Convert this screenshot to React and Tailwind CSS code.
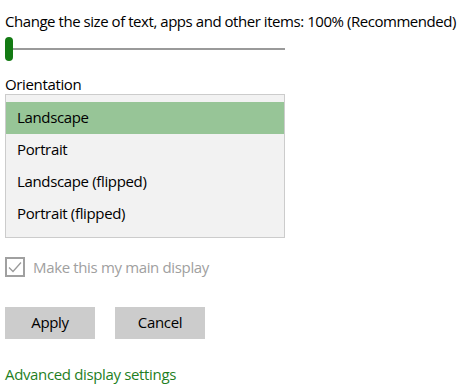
import React from "react";

export default function App() {
  const items = ["Landscape", "Portrait", "Landscape (flipped)", "Portrait (flipped)"];
  return (
    <div
      className="w-[468px] h-[387px] bg-white pl-[5px] pt-[11px] text-black overflow-hidden tracking-[-0.35px]"
      style={{ fontFamily: '"Open Sans", "Noto Sans", sans-serif' }}
    >
      <div className="text-[15px] leading-[20px] whitespace-nowrap tracking-[-0.45px]">
        Change the size of text, apps and other items: 100% (Recommended)
      </div>
      <div className="mt-[6px] w-[280px] h-[24px] flex items-center">
        <div className="w-[8px] h-[24px] rounded-full bg-[#137a13]" />
        <div className="flex-1 h-[2px] bg-[#9a9a9a]" />
      </div>
      <div className="mt-[13px] text-[15px] leading-[20px]">Orientation</div>
      <div className="w-[280px] border border-[#cccccc] bg-[#f2f2f2] py-[7px]">
        {items.map((it, i) => (
          <div
            key={it}
            className={
              "h-[32px] pl-[11px] pb-[1px] flex items-center text-[15px] " +
              (i === 0 ? "bg-[#97c597]" : "")
            }
          >
            {it}
          </div>
        ))}
      </div>
      <div className="mt-[19px] flex items-center gap-[8px]">
        <div className="w-[20px] h-[20px] border-2 border-[#a0a0a0] flex items-center justify-center">
          <svg width="16" height="16" viewBox="0 0 16 16">
            <path d="M2 8.5 L6 12.5 L14 3.5" fill="none" stroke="#9a9a9a" strokeWidth="1.3" />
          </svg>
        </div>
        <span className="text-[15px] leading-[20px] text-[#a0a0a0]">Make this my main display</span>
      </div>
      <div className="mt-[30px] flex gap-[20px]">
        <div className="w-[90px] h-[32px] pb-[1px] bg-[#cccccc] flex items-center justify-center text-[15px]">Apply</div>
        <div className="w-[90px] h-[32px] pb-[1px] bg-[#cccccc] flex items-center justify-center text-[15px]">Cancel</div>
      </div>
      <div className="mt-[25px] text-[15px] leading-[20px] text-[#1f7f1f]">Advanced display settings</div>
    </div>
  );
}
